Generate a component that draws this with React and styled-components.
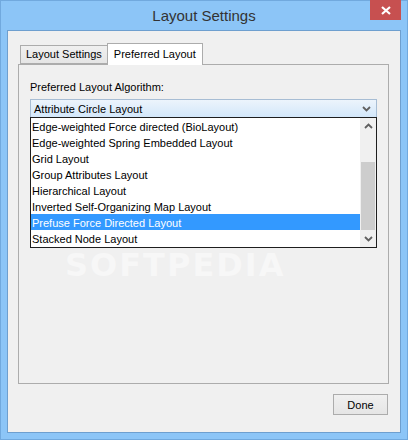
import React, { useState } from 'react';
import styled, { createGlobalStyle } from 'styled-components';

const GlobalStyle = createGlobalStyle`
  html, body {
    margin: 0;
    padding: 0;
    background: #8cc5f7;
  }
  body {
    font-family: "Liberation Sans", Arial, sans-serif;
    font-size: 11px;
    color: #000;
  }
`;

const Window = styled.div`
  width: 408px;
  height: 440px;
  box-sizing: border-box;
  display: flex;
  flex-direction: column;
  background: #8cc5f7;
  border: 1px solid #71a9de;
`;

const TitleBar = styled.div`
  height: 29px;
  display: grid;
  grid-template-columns: 1fr auto 1fr;
  align-items: start;
`;

const Title = styled.div`
  grid-column: 2;
  font-size: 15px;
  line-height: 30px;
  color: #333;
`;

const CloseButton = styled.div`
  grid-column: 3;
  justify-self: end;
  width: 31px;
  height: 20px;
  margin-right: 6px;
  margin-top: -1px;
  background: #c75050;
  display: flex;
  align-items: center;
  justify-content: center;
`;

const Client = styled.div`
  flex: 1;
  margin: 0 6px 6px 6px;
  border: 1px solid #6e9fcf;
  background: #f0f0f0;
  display: flex;
  flex-direction: column;
  padding: 12px 11px 16px 10px;
`;

const TabStrip = styled.div`
  display: flex;
  align-items: flex-end;
  height: 21px;
  padding-left: 2px;
  position: relative;
  z-index: 1;
`;

const Tab = styled.div`
  box-sizing: border-box;
  height: ${(p) => (p.$active ? '22px' : '19px')};
  margin-bottom: ${(p) => (p.$active ? '-1px' : '0')};
  padding: 0 ${(p) => (p.$active ? '6px' : '5px')};
  border: 1px solid #acacac;
  border-bottom: ${(p) => (p.$active ? 'none' : '1px solid #acacac')};
  margin-left: ${(p) => (p.$active ? '-1px' : '0')};
  background: ${(p) => (p.$active ? '#fff' : 'linear-gradient(#f0f0f0, #e5e5e5)')};
  line-height: ${(p) => (p.$active ? '20px' : '17px')};
  cursor: default;
  white-space: nowrap;
`;

const Panel = styled.div`
  height: 320px;
  box-sizing: border-box;
  border: 1px solid #acacac;
  padding: 15px 11px 0 11px;
  display: flex;
  flex-direction: column;
  position: relative;
  overflow: hidden;
`;

const Label = styled.div`
  line-height: 14px;
  margin-bottom: 5px;
`;

const Combo = styled.div`
  height: 19px;
  box-sizing: border-box;
  border: 1px solid #a7bdd4;
  background: linear-gradient(#ecf4fc, #d3e7fa);
  display: flex;
  align-items: center;
  justify-content: space-between;
  padding: 1px 5px 0 3px;
`;

const ListBox = styled.div`
  height: 131px;
  box-sizing: border-box;
  border: 1px solid #1e1e1e;
  margin-top: -1px;
  background: #fff;
  display: flex;
  position: relative;
  z-index: 1;
`;

const Items = styled.div`
  flex: 1;
  display: flex;
  flex-direction: column;
`;

const Item = styled.div`
  height: 16px;
  box-sizing: border-box;
  padding: 1px 0 0 1px;
  line-height: 16px;
  white-space: nowrap;
  background: ${(p) => (p.$selected ? '#3399ff' : 'transparent')};
  color: ${(p) => (p.$selected ? '#fff' : '#000')};
`;

const ScrollBar = styled.div`
  width: 16px;
  background: #f0f0f0;
  display: flex;
  flex-direction: column;
`;

const ScrollButton = styled.div`
  height: 16px;
  display: flex;
  align-items: center;
  justify-content: center;
`;

const Track = styled.div`
  flex: 1;
  display: flex;
  flex-direction: column;
  padding: 28px 1px 0 1px;
`;

const Thumb = styled.div`
  height: 68px;
  background: #cdcdcd;
`;

const Watermark = styled.div`
  position: absolute;
  left: 46px;
  top: 184px;
  font-family: "DejaVu Sans", sans-serif;
  font-weight: bold;
  font-size: 32px;
  line-height: 32px;
  letter-spacing: 2px;
  color: #f7f7f7;
  pointer-events: none;
`;

const ButtonRow = styled.div`
  display: flex;
  justify-content: flex-end;
  margin-top: 10px;
  padding-right: 1px;
`;

const Button = styled.button`
  width: 55px;
  height: 21px;
  box-sizing: border-box;
  border: 1px solid #acacac;
  background: linear-gradient(#f0f0f0, #e5e5e5);
  font-family: "Liberation Sans", Arial, sans-serif;
  font-size: 11px;
  color: #000;
  padding: 0;
`;

const Chevron = ({ up }) => (
  <svg width="9" height="6" viewBox="0 0 9 6">
    <polyline
      points={up ? '1,5 4.5,1.5 8,5' : '1,1 4.5,4.5 8,1'}
      fill="none"
      stroke="#606060"
      strokeWidth="1.8"
    />
  </svg>
);

const layouts = [
  'Edge-weighted Force directed (BioLayout)',
  'Edge-weighted Spring Embedded Layout',
  'Grid Layout',
  'Group Attributes Layout',
  'Hierarchical Layout',
  'Inverted Self-Organizing Map Layout',
  'Prefuse Force Directed Layout',
  'Stacked Node Layout',
];

export default function App() {
  const [selected, setSelected] = useState('Prefuse Force Directed Layout');

  return (
    <>
      <GlobalStyle />
      <Window>
        <TitleBar>
          <Title>Layout Settings</Title>
          <CloseButton>
            <svg width="10" height="9" viewBox="0 0 10 9">
              <path d="M1 1 L9 8 M9 1 L1 8" stroke="#fff" strokeWidth="2.2" />
            </svg>
          </CloseButton>
        </TitleBar>
        <Client>
          <TabStrip>
            <Tab>Layout Settings</Tab>
            <Tab $active>Preferred Layout</Tab>
          </TabStrip>
          <Panel>
            <Label>Preferred Layout Algorithm:</Label>
            <Combo>
              <span>Attribute Circle Layout</span>
              <Chevron />
            </Combo>
            <ListBox>
              <Items>
                {layouts.map((name) => (
                  <Item
                    key={name}
                    $selected={name === selected}
                    onClick={() => setSelected(name)}
                  >
                    {name}
                  </Item>
                ))}
              </Items>
              <ScrollBar>
                <ScrollButton>
                  <Chevron up />
                </ScrollButton>
                <Track>
                  <Thumb />
                </Track>
                <ScrollButton>
                  <Chevron />
                </ScrollButton>
              </ScrollBar>
            </ListBox>
            <Watermark>SOFTPEDIA</Watermark>
          </Panel>
          <ButtonRow>
            <Button>Done</Button>
          </ButtonRow>
        </Client>
      </Window>
    </>
  );
}
